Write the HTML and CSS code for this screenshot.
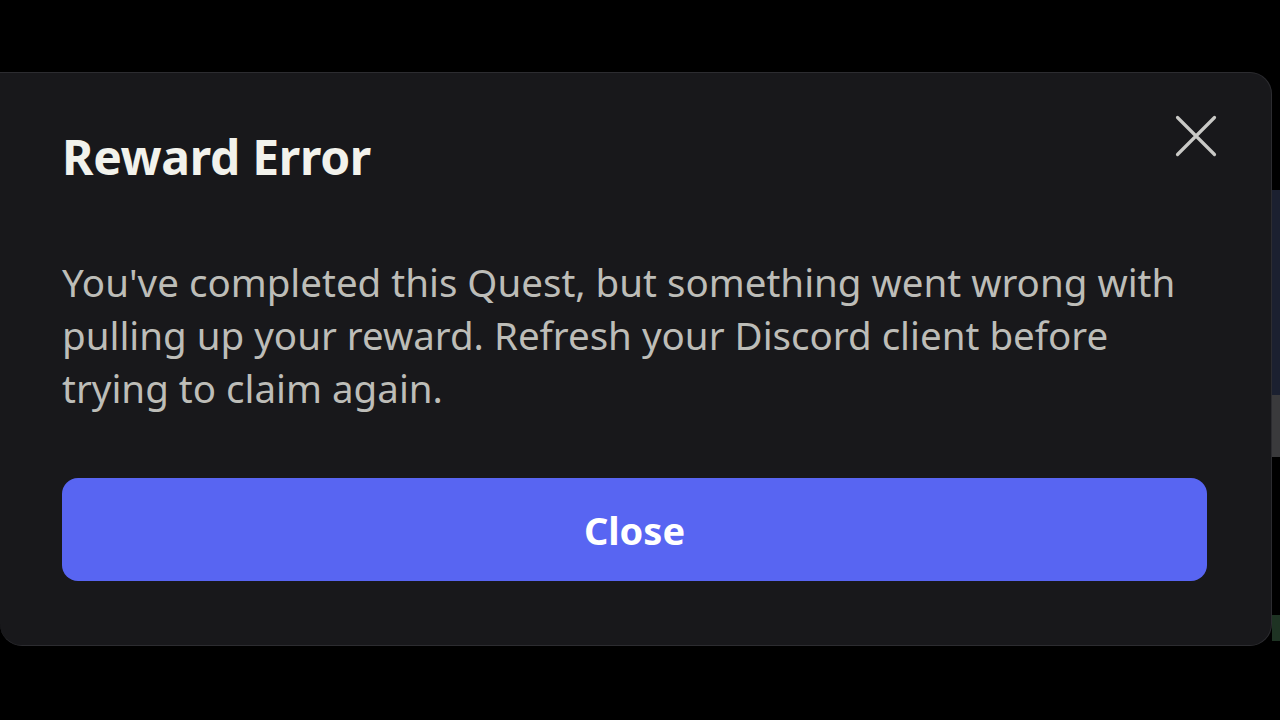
FILE: index.html
```html
<!DOCTYPE html>
<html lang="en">
<head>
<meta charset="utf-8">
<title>Reward Error</title>
<link rel="stylesheet" href="styles.css">
</head>
<body>
<div class="stage">
  <div class="modal">
    <div class="modal-header">
      <h1 class="modal-title">Reward Error</h1>
      <button class="close-icon" aria-label="Close">
        <svg width="42" height="42" viewBox="0 0 42 42"><path d="M2.5 2.5 L39.5 39.5 M39.5 2.5 L2.5 39.5" stroke="#c9c9c6" stroke-width="3.2" stroke-linecap="round" fill="none"/></svg>
      </button>
    </div>
    <p class="modal-body">You've completed this Quest, but something went wrong with pulling up your reward. Refresh your Discord client before trying to claim again.</p>
    <button class="primary-btn">Close</button>
  </div>
  <div class="edge">
    <div class="edge-blue"></div>
    <div class="edge-grey"></div>
    <div class="edge-green"></div>
  </div>
</div>
</body>
</html>
```
FILE: styles.css
```css
html, body {
  margin: 0;
  padding: 0;
  background: #000;
  width: 1280px;
  height: 720px;
  overflow: hidden;
  font-family: "Noto Sans", "Open Sans", sans-serif;
}
.stage {
  display: flex;
  align-items: flex-start;
  padding-top: 72px;
  height: 648px;
}
.modal {
  box-sizing: border-box;
  width: 1272px;
  height: 574px;
  background: #18181b;
  border: 1px solid #2c2c30;
  border-left: none;
  border-radius: 0 22px 22px 22px;
  padding: 0 64px 0 62px;
  display: flex;
  flex-direction: column;
}
.modal-header {
  display: flex;
  justify-content: space-between;
  align-items: flex-start;
  margin-top: 44px;
}
.modal-title {
  margin: 0;
  font-size: 48px;
  font-weight: 700;
  color: #f2f2ec;
  line-height: 80px;
  letter-spacing: -0.3px;
}
.close-icon {
  background: none;
  border: none;
  padding: 0;
  margin: -2px -10px 0 0;
  width: 42px;
  height: 42px;
  cursor: pointer;
}
.close-icon svg { display: block; }
.modal-body {
  margin: 59px 0 0 0;
  font-size: 38.5px;
  line-height: 53px;
  color: #bdbdb8;
}
.primary-btn {
  margin-top: 63px;
  height: 103px;
  width: 100%;
  border: none;
  border-radius: 16px;
  background: #5865f2;
  color: #fff;
  font-family: inherit;
  font-size: 38px;
  font-weight: 700;
}
.edge {
  width: 8px;
  display: flex;
  flex-direction: column;
  padding-top: 118px;
}
.edge-blue { height: 205px; background: #1b2030; }
.edge-grey { height: 62px; background: #3a3a3c; }
.edge-green { height: 26px; margin-top: 158px; background: #1e3323; }
```
